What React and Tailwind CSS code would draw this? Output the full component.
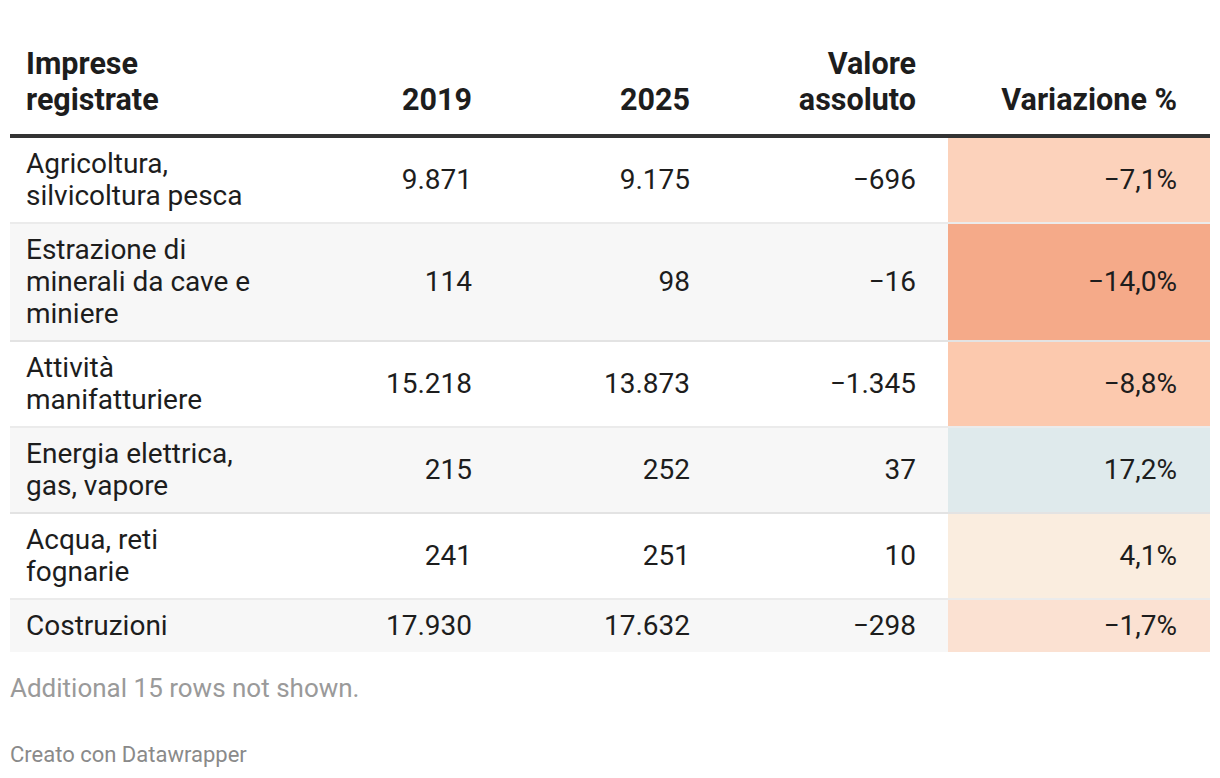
const rows = [
  { name: ['Agricoltura,', 'silvicoltura pesca'], a: '9.871', b: '9.175', abs: '−696', pct: '−7,1%', color: 'bg-[#fcd2bb]' },
  { name: ['Estrazione di', 'minerali da cave e', 'miniere'], a: '114', b: '98', abs: '−16', pct: '−14,0%', color: 'bg-[#f5aa89]' },
  { name: ['Attività', 'manifatturiere'], a: '15.218', b: '13.873', abs: '−1.345', pct: '−8,8%', color: 'bg-[#fcc9ae]' },
  { name: ['Energia elettrica,', 'gas, vapore'], a: '215', b: '252', abs: '37', pct: '17,2%', color: 'bg-[#dfeaec]' },
  { name: ['Acqua, reti', 'fognarie'], a: '241', b: '251', abs: '10', pct: '4,1%', color: 'bg-[#faeddf]' },
  { name: ['Costruzioni'], a: '17.930', b: '17.632', abs: '−298', pct: '−1,7%', color: 'bg-[#fbe1d2]' },
]

function Lines({ lines }) {
  return lines.map((l, i) => <span key={i} className="block">{l}</span>)
}

export default function App() {
  return (
    <div className="w-[1220px] h-[778px] bg-white px-[10px] pt-[46px] text-[#1d1d1d] font-['Roboto',sans-serif]">
      {/* header */}
      <div className="flex items-end text-[30.5px] leading-[36px] font-bold pb-[16px] border-b-[4px] border-[#333333]">
        <div className="w-[262px] pl-[16px]"><Lines lines={['Imprese', 'registrate']} /></div>
        <div className="w-[232px] pr-[32px] text-right">2019</div>
        <div className="w-[218px] pr-[32px] text-right">2025</div>
        <div className="w-[226px] pr-[32px] text-right"><Lines lines={['Valore', 'assoluto']} /></div>
        <div className="w-[262px] pr-[33px] text-right">Variazione %</div>
      </div>

      {/* body */}
      <div className="text-[28px] leading-[32px]">
        {rows.map((r, i) => (
          <div
            key={i}
            className={`flex items-stretch ${i % 2 === 1 ? 'bg-[#f7f7f7]' : 'bg-white'} ${i < rows.length - 1 ? 'border-b-2 border-black/[0.08]' : ''}`}
          >
            <div className="w-[262px] pl-[16px] py-[10px]"><Lines lines={r.name} /></div>
            <div className="w-[232px] pr-[32px] py-[10px] flex items-center justify-end">{r.a}</div>
            <div className="w-[218px] pr-[32px] py-[10px] flex items-center justify-end">{r.b}</div>
            <div className="w-[226px] pr-[32px] py-[10px] flex items-center justify-end">{r.abs}</div>
            <div className={`w-[262px] pr-[33px] py-[10px] flex items-center justify-end ${r.color}`}>{r.pct}</div>
          </div>
        ))}
      </div>

      {/* notes */}
      <p className="mt-[21px] text-[26px] leading-[30px] text-[#9a9a9a]">Additional 15 rows not shown.</p>
      <p className="mt-[39px] text-[22px] leading-[26px] text-[#8a8a8a]">Creato con Datawrapper</p>
    </div>
  )
}
